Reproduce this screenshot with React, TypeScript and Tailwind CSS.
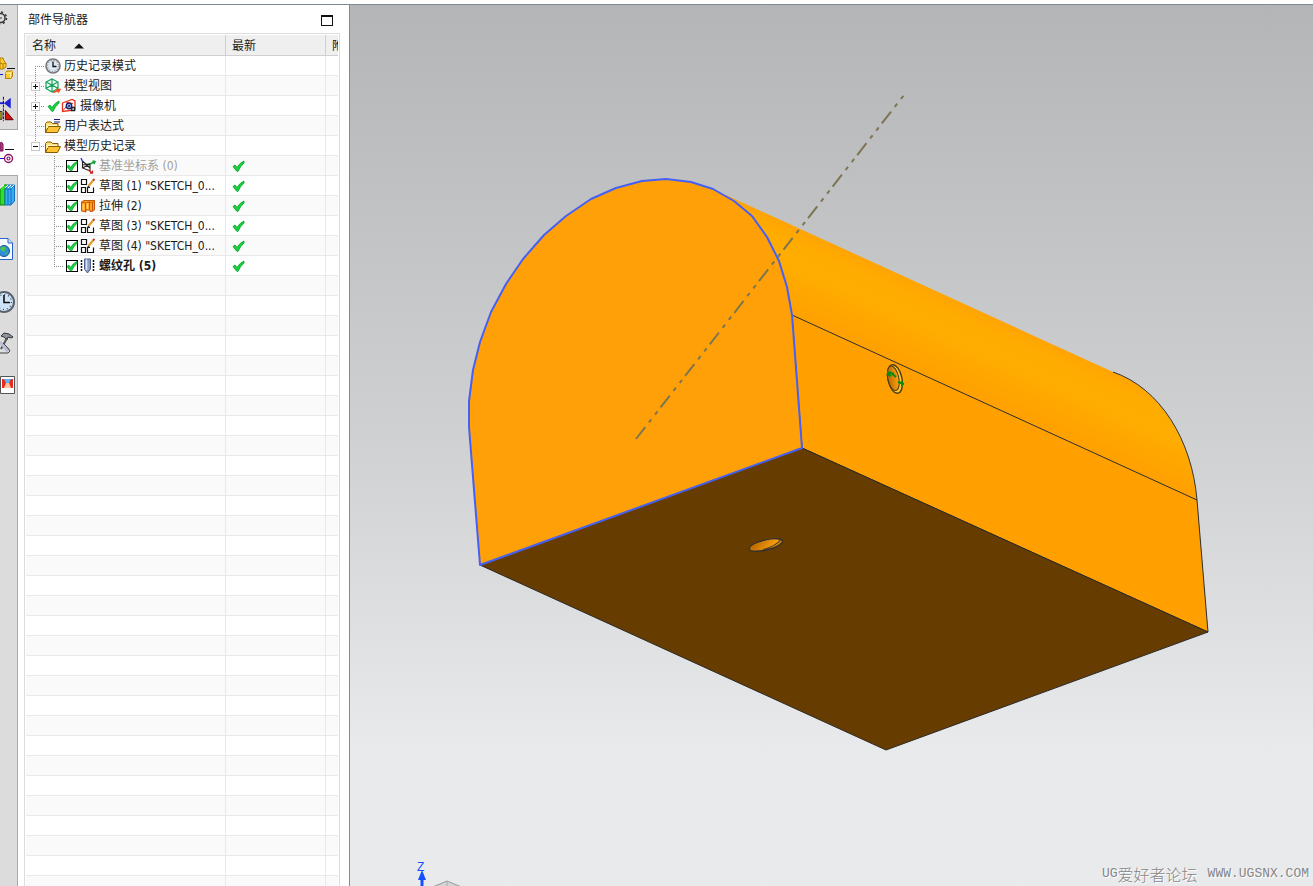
import type { ReactNode } from "react";

type IconName = "clock" | "views" | "camera" | "expressions" | "folder" | "datum" | "sketch" | "extrude" | "hole";

type TreeNode = {
  label: string;
  icon: IconName;
  expander?: "plus" | "minus";
  level: 0 | 1;
  tick?: boolean;
  latest?: boolean;
  muted?: boolean;
  bold?: boolean;
};

const NODES: TreeNode[] = [
  { label: "历史记录模式", icon: "clock", level: 0 },
  { label: "模型视图", icon: "views", level: 0, expander: "plus" },
  { label: "摄像机", icon: "camera", level: 0, expander: "plus", tick: true },
  { label: "用户表达式", icon: "expressions", level: 0 },
  { label: "模型历史记录", icon: "folder", level: 0, expander: "minus" },
  { label: "基准坐标系 (0)", icon: "datum", level: 1, latest: true, muted: true },
  { label: '草图 (1) "SKETCH_0...', icon: "sketch", level: 1, latest: true },
  { label: "拉伸 (2)", icon: "extrude", level: 1, latest: true },
  { label: '草图 (3) "SKETCH_0...', icon: "sketch", level: 1, latest: true },
  { label: '草图 (4) "SKETCH_0...', icon: "sketch", level: 1, latest: true },
  { label: "螺纹孔 (5)", icon: "hole", level: 1, latest: true, bold: true },
];

const EMPTY_ROWS = 31;

const CheckMark = ({ className }: { className: string }) => (
  <svg viewBox="0 0 13 12" className={className} aria-hidden="true">
    <path d="M1 6.5 L3 5 L5 7.5 Q8 2.500 12 1 L12 3 Q8 6.500 6 11.500 L4.500 11 Z" fill="#12d63c" stroke="#0b9a2a" strokeWidth="0.8" />
  </svg>
);

const Folder = () => (
  <>
    <path d="M0.500 14.500 V5.500 L2 4 H6 L7.500 5.500 H13 V8" fill="#ffe27a" stroke="#8a5a00" />
    <path d="M0.500 14.500 L3.500 8.500 H15.500 L12.500 14.500 Z" fill="#fdc534" stroke="#8a5a00" />
    <path d="M2 7 V10 L3 7.500 H12" fill="none" stroke="#fff6c4" />
  </>
);

const ICONS: Record<IconName, ReactNode> = {
  clock: (
    <>
      <circle cx="8" cy="8" r="7" fill="#dfe9f2" stroke="#777" strokeWidth="1.600" />
      <circle cx="8" cy="8" r="5.400" fill="none" stroke="#5b6470" strokeWidth="1" strokeDasharray="1 1.830" />
      <path d="M8 3.500 V8.500 H11.500" fill="none" stroke="#111" strokeWidth="1.300" />
    </>
  ),
  views: (
    <>
      <path d="M7 1 L13 4 V10.500 L7 14 L1 10.500 V4 Z M1 4 L7 7 L13 4 M7 7 V14 M7 1 V7 M1 10.500 L7 7 L13 10.500" fill="#e9fff2" stroke="#16a05a" strokeWidth="1.200" />
      <path d="M8 14.500 L14 12 M11.500 11.500 L15 11.500 L13 14.500" fill="none" stroke="#f04a1c" strokeWidth="1.400" />
    </>
  ),
  camera: (
    <>
      <path d="M1.500 5 L11 1.500 L14 3 V12 L1.500 13.500 Z" fill="#fff" stroke="#e0321c" strokeWidth="1.300" />
      <path d="M1.500 13 L5 9 M5 4 L12 5.500" stroke="#e0321c" />
      <circle cx="8" cy="8" r="2.800" fill="#8ea8e8" stroke="#161c62" strokeWidth="1.300" />
      <circle cx="8" cy="8" r="1" fill="#161c62" />
      <path d="M11 9.500 H13.500 V12.500 H10.500 Z" fill="#fff" stroke="#222" strokeWidth="1.300" />
    </>
  ),
  expressions: (
    <>
      <Folder />
      <path d="M9 1.500 H15 M9 4 H15" stroke="#1c1c80" strokeWidth="1.200" />
    </>
  ),
  folder: <Folder />,
  datum: (
    <>
      <path d="M2.500 3 V10 L10 13 V6 L2.500 10 M2.500 3 L10 10 M3 7 L11 5.500" fill="none" stroke="#222" strokeWidth="1.100" />
      <path d="M1 0 L2.500 3.500" stroke="#2a3bd0" strokeWidth="1.400" />
      <path d="M10 6 L15 3.500 M12.500 3 L15 3.500 L14 6" fill="none" stroke="#11a33a" strokeWidth="1.500" />
      <path d="M8 12 L12.500 15 M12.500 12.500 L12.500 15 H10" fill="none" stroke="#d42020" strokeWidth="1.300" />
    </>
  ),
  sketch: (
    <>
      <path d="M1.500 1.500 H6.500 V6.500 H1.500 Z M1.500 9.500 H5.500 V14.500 H1.500 Z M10 9.500 H7.500 V14.500 H13.500 V9.500" fill="#fff" stroke="#111" strokeWidth="1.200" />
      <path d="M8.500 8 L13 2.500" stroke="#e4a02a" strokeWidth="2.200" />
      <path d="M13 2.500 L14.500 1" stroke="#c23a2a" strokeWidth="2" />
      <path d="M7.500 9.500 L9 8" stroke="#333" strokeWidth="1.200" />
    </>
  ),
  extrude: (
    <>
      <path d="M1.500 4 L4 2.500 H14.500 V12 L12 13.500 H10 V12 H6 V14 L1.500 13 Z" fill="#ffa21c" stroke="#c4570a" />
      <path d="M5.500 5 V13 M9.500 4 V12 M12.500 4 V13 M1.500 4 L5.500 5 L9.500 4 L12.500 4.500 L14.500 3" fill="none" stroke="#c4570a" />
      <path d="M3.500 6 V12 M7.500 5 V11" stroke="#ffd07a" strokeWidth="1.500" />
    </>
  ),
  hole: (
    <>
      <path d="M4.500 1 H10.500 V11 L7.500 15 L4.500 11 Z" fill="#8d9cc4" stroke="#50608e" />
      <path d="M6.500 1.500 V12" stroke="#dbe3f6" strokeWidth="1.600" />
      <path d="M1.500 2 V14 M13.500 2 V14" stroke="#111" strokeWidth="1.500" strokeDasharray="2 1" />
    </>
  ),
};

const TreeIcon = ({ name }: { name: IconName }) => (
  <svg viewBox="0 0 16 16" className="size-4 shrink-0" aria-hidden="true">
    {ICONS[name]}
  </svg>
);

const DOTS = { stroke: "#8c8c8c", strokeDasharray: "1 1" };

const RootGuide = ({ first, last, expander }: { first: boolean; last: boolean; expander?: "plus" | "minus" }) => (
  <svg viewBox="0 0 19 19" className="h-[19px] w-[19px] shrink-0" aria-hidden="true">
    <path d={first ? "M9.500 10 V19" : last ? "M9.500 0 V10" : "M9.500 0 V19"} {...DOTS} />
    <path d="M9 10.500 H19" {...DOTS} />
    {expander && (
      <>
        <rect x="5.500" y="6.500" width="8" height="8" fill="#fff" stroke="#c8c8c8" />
        <path d={expander === "plus" ? "M7 10.500 H12 M9.500 8 V13" : "M7 10.500 H12"} stroke="#111" />
      </>
    )}
  </svg>
);

const ChildGuide = ({ last }: { last: boolean }) => (
  <svg viewBox="0 0 40 19" className="h-[19px] w-10 shrink-0" aria-hidden="true">
    <path d={last ? "M28.500 0 V10" : "M28.500 0 V19"} {...DOTS} />
    <path d="M28 10.500 H38" {...DOTS} />
  </svg>
);

const NodeLabel = ({ node }: { node: TreeNode }) => {
  const tone = node.muted ? "text-[#a0a0a0]" : "text-[#1a1a1a]";
  return <span className={`pl-[3px] ${tone} ${node.bold ? "font-bold" : ""}`}>{node.label}</span>;
};

const NodeCell = ({ node, index }: { node: TreeNode; index: number }) => {
  if (node.level === 1) {
    return (
      <label className="flex h-[19px] items-center whitespace-nowrap">
        <ChildGuide last={index === NODES.length - 1} />
        <span className="relative mr-0.5 size-3 shrink-0">
          <input type="checkbox" defaultChecked className="peer block size-3 appearance-none border border-black bg-white" />
          <CheckMark className="pointer-events-none absolute inset-0 hidden size-3 peer-checked:block" />
        </span>
        <TreeIcon name={node.icon} />
        <NodeLabel node={node} />
      </label>
    );
  }

  const guide = <RootGuide first={index === 0} last={node.expander === "minus"} expander={node.expander} />;
  return (
    <div className="flex h-[19px] items-center whitespace-nowrap">
      {node.expander ? (
        <button type="button" aria-label={node.label} aria-expanded={node.expander === "minus"}>
          {guide}
        </button>
      ) : (
        guide
      )}
      {node.tick && (
        <span className="flex w-4 shrink-0 justify-center">
          <CheckMark className="h-3 w-[13px]" />
        </span>
      )}
      <TreeIcon name={node.icon} />
      <NodeLabel node={node} />
    </div>
  );
};

const HEAD = "h-[21px] overflow-hidden whitespace-nowrap border-b border-[#cfcfcf] bg-[#efefef] p-0 pt-0.5 pl-1.5 text-left font-normal";
const CELL = "h-5 border-b border-[#e9e9e9] p-0";

const NavigatorTable = () => (
  <table className="w-full table-fixed border-separate border-spacing-0">
    <colgroup>
      <col />
      <col className="w-[100px]" />
      <col className="w-3" />
    </colgroup>
    <thead>
      <tr>
        <th className={`${HEAD} border-r`}>
          <button type="button" className="flex items-center gap-[18px]">
            名称
            <svg viewBox="0 0 10 6" className="h-1.5 w-2.5" aria-hidden="true">
              <path d="M0 5.500 L5 0.500 L10 5.500 Z" fill="#111" />
            </svg>
          </button>
        </th>
        <th className={`${HEAD} border-r`}>最新</th>
        <th className={HEAD}>附</th>
      </tr>
    </thead>
    <tbody>
      {NODES.map((node, i) => (
        <tr key={i} className="even:bg-[#fafafa]">
          <td className={`${CELL} border-r`}>
            <NodeCell node={node} index={i} />
          </td>
          <td className={`${CELL} border-r pl-1.5`}>{node.latest && <CheckMark className="h-3 w-[13px]" />}</td>
          <td className={CELL} />
        </tr>
      ))}
      {Array.from({ length: EMPTY_ROWS }, (_, i) => (
        <tr key={`empty-${i}`} className="even:bg-[#fafafa]">
          <td className={`${CELL} border-r`} />
          <td className={`${CELL} border-r`} />
          <td className={CELL} />
        </tr>
      ))}
    </tbody>
  </table>
);

const RailButton = ({ label, height, className, children }: { label: string; height: number; className: string; children: ReactNode }) => (
  <button type="button" aria-label={label} className={`block w-full shrink-0 ${className}`}>
    <svg viewBox={`0 0 17 ${height}`} preserveAspectRatio="xMinYMin meet" className="size-full" aria-hidden="true">
      {children}
    </svg>
  </button>
);

const ResourceBar = () => (
  <nav className="flex w-[18px] shrink-0 flex-col overflow-hidden">
    <div className="flex h-[125px] shrink-0 flex-col border-r border-b border-[#a9a9a9] bg-[#dcdcdc]">
      <RailButton label="设置" height={28} className="h-7">
        <circle cx="0.500" cy="13" r="4.500" fill="none" stroke="#333" strokeWidth="1.500" />
        <circle cx="0.500" cy="13" r="6" fill="none" stroke="#333" strokeWidth="1.500" strokeDasharray="2 2.700" />
        <path d="M0 13 H2" stroke="#333" />
      </RailButton>
      <RailButton label="装配导航器" height={56} className="h-14">
        <path d="M0 25 L3 25 L4 28 L6 30 V34 L3 36 H0 Z" fill="#ffcc33" stroke="#b57c00" />
        <path d="M0 30 L3 31 L6 30 M3 31 V36" fill="none" stroke="#b57c00" />
        <path d="M7 35.500 H15" stroke="#111" />
        <path d="M0 41.500 H3" stroke="#1414d0" />
        <path d="M5.500 40 L7 38 H12.500 V43 L11 45.500 H5.500 Z" fill="#ffc928" stroke="#b57c00" />
        <path d="M5.500 40 H10.500 V45 M10.500 40 L12.500 38" fill="none" stroke="#fff0a0" />
      </RailButton>
      <RailButton label="约束导航器" height={41} className="h-10">
        <path d="M11 9 V20 L4 14.500 Z" fill="#2020d8" />
        <path d="M0 14.500 H4" stroke="#2020d8" strokeWidth="2" />
        <path d="M3.500 8 V33" stroke="#111" strokeDasharray="3 1" />
        <path d="M0 23 H2 V31 H0 Z" fill="#ffee22" stroke="#222" />
        <path d="M5.500 22 L13.500 31.500 H5.500 Z" fill="#dc1111" stroke="#500" />
      </RailButton>
    </div>
    <RailButton label="部件导航器" height={45} className="h-[45px] bg-white">
      <path d="M0 13 Q2 11 3 14 V21 H0 Z" fill="#a33a78" stroke="#7d1559" />
      <path d="M5 19.500 H14" stroke="#111" />
      <path d="M0 28.500 H4" stroke="#1414d0" />
      <circle cx="8.500" cy="28.500" r="4" fill="#fff" stroke="#8b1568" strokeWidth="1.400" />
      <circle cx="8.500" cy="28.500" r="1.500" fill="#fff" stroke="#8b1568" strokeWidth="1.200" />
    </RailButton>
    <div className="flex flex-1 flex-col border-t border-r border-[#a9a9a9] bg-[#dcdcdc]">
      <RailButton label="重用库" height={46} className="h-[46px]">
        <path d="M0 13 L4 9 H8 L5 13 V29 H0 Z" fill="#2fe025" stroke="#087d10" />
        <path d="M5 13 L8 9 H14.500 V25 L11 29 H5 Z" fill="#35acf4" stroke="#1670bd" />
        <path d="M8 13 V29 M11 13 V29 M5 13 H11 L14.500 9" fill="none" stroke="#1670bd" />
        <path d="M0 12.500 L4 9 M5 12 L8 9 M8 12 L11 9 M11 12 L14 9" stroke="#fff" />
      </RailButton>
      <RailButton label="Web 浏览器" height={56} className="h-14">
        <path d="M0 16.500 H8 L12.500 21 V37.500 H0" fill="#f7fbff" stroke="#2864c8" />
        <path d="M8 16.500 V21 H12.500" fill="#cfe0fa" stroke="#2864c8" />
        <circle cx="4" cy="29" r="5.500" fill="#2d8fd8" stroke="#17588f" />
        <path d="M0 26 Q4 23 6 26 L4 30 L1 28 Z M5 32 L8 29 L6 33 Z" fill="#4dc34b" />
      </RailButton>
      <RailButton label="历史记录" height={48} className="h-12">
        <circle cx="4" cy="24" r="10" fill="#cfe3f8" stroke="#59626e" strokeWidth="2" />
        <circle cx="4" cy="24" r="7.500" fill="none" stroke="#345" strokeWidth="1.200" strokeDasharray="1 2.927" />
        <path d="M4 17 V24.500 H10" fill="none" stroke="#111" strokeWidth="1.600" />
      </RailButton>
      <RailButton label="加工向导" height={40} className="h-10">
        <path d="M1 10 L4 7 L9 8 L13 11 L11 12 L8 11 L7 14 L4 11 Z" fill="#8d949b" stroke="#333" />
        <path d="M7 12 L1 23" stroke="#555" strokeWidth="2" />
        <path d="M0 16 L7 24 L9 22" fill="none" stroke="#b7bdd5" strokeWidth="3" />
        <path d="M0 27 H8 L10 25 L7 21 L3 17" fill="none" stroke="#444" />
      </RailButton>
      <RailButton label="角色" height={40} className="h-10">
        <path d="M0.500 10.500 H14.500 V27.500 H0.500 Z" fill="#fff" stroke="#555" />
        <path d="M2 13 H13 V22 H2 Z" fill="#e62f22" />
        <path d="M4 13 H11 L9 17 H6 Z" fill="#5fb5f4" />
        <path d="M4 22 L6 17 H9 L11 22 Z" fill="#ffc49a" />
      </RailButton>
    </div>
  </nav>
);

const PartNavigator = () => (
  <aside className="flex w-[332px] shrink-0 flex-col border-r border-[#808a92] bg-white pr-[9px] pl-1.5">
    <div className="flex h-7 shrink-0 items-center justify-between pt-0.5 pr-[7px] pl-1">
      <h1>部件导航器</h1>
      <button type="button" aria-label="最大化" className="h-[11px] w-3 border border-t-2 border-[#111]" />
    </div>
    <div className="min-h-0 flex-1 overflow-hidden border border-b-0 border-[#dcdcdc] p-px">
      <NavigatorTable />
    </div>
  </aside>
);

const FACE =
  "M480 565 L469 427 L469 401 L473 370 L480 342 L491 312 L506 284 L523 259 L544 235 L566 216 L591 199 L616 188 L642 181 L666 179 L691 182 L713 189 L734 201 L752 216 L767 237 L779 261 L787 287 L792 315 L802 448 Z";

const ModelView = () => (
  <svg viewBox="350 5 963 881" preserveAspectRatio="xMinYMin slice" className="block size-full" role="img" aria-label="模型">
    <defs>
      <linearGradient id="round" gradientUnits="userSpaceOnUse" x1="995" y1="408" x2="1029" y2="333">
        <stop offset="0%" stopColor="#ffa000" />
        <stop offset="25%" stopColor="#ffa500" />
        <stop offset="55%" stopColor="#ffad00" />
        <stop offset="80%" stopColor="#ffac00" />
        <stop offset="100%" stopColor="#ffa404" />
      </linearGradient>
      <linearGradient id="bore" x1="0" y1="0.300" x2="1" y2="0.600">
        <stop offset="0%" stopColor="#b86600" />
        <stop offset="100%" stopColor="#ffa410" />
      </linearGradient>
    </defs>

    {/* rounded top */}
    <path d="M726 195 L1113 372 C1160 388 1192 440 1197 500 L792 315 L750 260 Z" fill="url(#round)" />
    <path d="M1113 372 C1160 388 1192 440 1197 500" fill="none" stroke="#333" />

    {/* side, bottom and front faces */}
    <path d="M792 315 L1197 500 L1208 632 L802 448 Z" fill="#ff9f00" stroke="#2d2d2d" />
    <path d="M802 448 L1208 632 L886 750 L480 565 Z" fill="#663c00" stroke="#2b2b2b" />
    <path d={FACE} fill="#ffa008" stroke="#4560f5" strokeWidth="2" strokeLinejoin="round" />

    {/* threaded hole on the side */}
    <g transform="rotate(-12 895 379)">
      <ellipse cx="895" cy="379" rx="7" ry="14.500" fill="#ffc92c" stroke="#4a3b18" strokeWidth="1.400" />
      <ellipse cx="893.500" cy="378" rx="5.500" ry="12.500" fill="url(#bore)" stroke="#4a3b18" />
    </g>
    <path d="M887 374 L891 376 M887 372 L894 374 M890 372 L896 377 M898 382 L904 384 M902 381 V386" stroke="#0a8a12" strokeWidth="2" />

    {/* hole in the bottom face */}
    <g transform="rotate(-14 766 545)">
      <ellipse cx="766" cy="545" rx="17" ry="5" fill="#c87c0c" stroke="#35322b" strokeWidth="1.500" />
      <ellipse cx="765" cy="544.500" rx="15" ry="4" fill="url(#bore)" />
      <path d="M762 549 Q776 548 782 543" fill="none" stroke="#3a3530" />
    </g>

    <path d="M636 439 L904 95" stroke="#7d7550" strokeWidth="2" strokeDasharray="15 6 4 6 4 5" />

    {/* view triad */}
    <text x="417" y="871" fontSize="12" fill="#1450ff" className="font-['Liberation_Sans',sans-serif]">
      Z
    </text>
    <path d="M422 870 L426 880 H418 Z" fill="#1450ff" />
    <path d="M422 878 V890" stroke="#1450ff" strokeWidth="3" />
    <path d="M430 888 L447 881 L464 888 Z" fill="#d2d3d4" stroke="#9b9b9b" />
    <path d="M447 881 V890" stroke="#a8a8a8" />
  </svg>
);

export default function App() {
  return (
    <div className="flex h-screen flex-col overflow-hidden bg-white font-['DejaVu_Sans_Condensed','Noto_Sans','Noto_Sans_CJK_SC',sans-serif] text-xs text-[#1a1a1a]">
      <div className="h-[5px] shrink-0 border-b border-[#808a92]" />
      <div className="flex min-h-0 flex-1">
        <ResourceBar />
        <PartNavigator />
        <main className="relative min-w-0 flex-1 bg-linear-to-b from-[#b4b5b6] via-[#d0d1d2] via-50% to-[#e9eaeb] to-85%">
          <ModelView />
          <p className="absolute right-1 bottom-0 flex items-center gap-2.5 leading-6 whitespace-nowrap text-[#858687] [text-shadow:1px_1px_0_#fff]">
            <span className="flex items-center">
              <span className="font-['Liberation_Mono',monospace] text-[13px]">UG</span>
              <span className="font-['Noto_Sans_CJK_SC',sans-serif] text-base leading-6 font-light">爱好者论坛</span>
            </span>
            <span className="font-['Liberation_Mono',monospace] text-[13px]">WWW.UGSNX.COM</span>
          </p>
        </main>
      </div>
    </div>
  );
}
